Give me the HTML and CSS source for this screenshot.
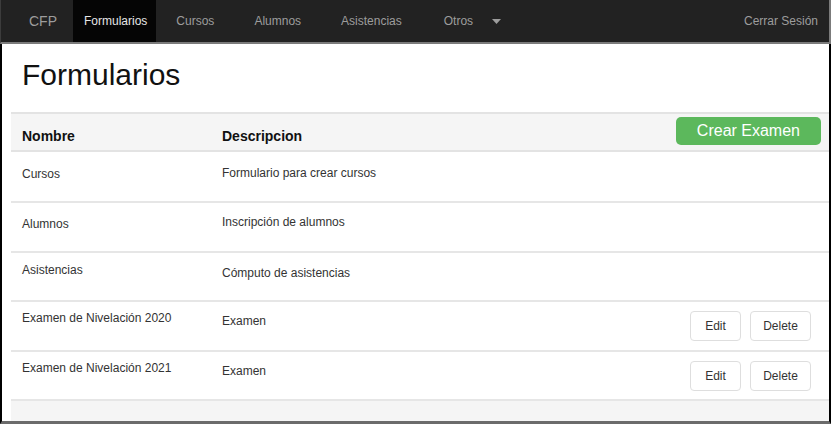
FILE: index.html
```html
<!DOCTYPE html>
<html lang="es">
<head>
<meta charset="utf-8">
<title>Formularios</title>
<link rel="stylesheet" href="styles.css">
</head>
<body>
<div class="page">
  <nav class="navbar">
    <span class="brand">CFP</span>
    <a class="nav-link active">Formularios</a>
    <a class="nav-link">Cursos</a>
    <a class="nav-link">Alumnos</a>
    <a class="nav-link">Asistencias</a>
    <a class="nav-link dropdown">Otros
      <svg class="caret" width="9" height="5" viewBox="0 0 9 5"><polygon points="0,0 9,0 4.5,5" fill="#9d9d9d"/></svg>
    </a>
    <a class="nav-link logout">Cerrar Sesión</a>
  </nav>
  <main class="main">
    <h1 class="title">Formularios</h1>
    <div class="table">
      <div class="thead">
        <div class="th">Nombre</div>
        <div class="th">Descripcion</div>
        <div class="th-actions"><button class="btn-success">Crear Examen</button></div>
      </div>
      <div class="tr r1">
        <div class="td name">Cursos</div>
        <div class="td desc">Formulario para crear cursos</div>
        <div class="td actions"></div>
      </div>
      <div class="tr r2">
        <div class="td name">Alumnos</div>
        <div class="td desc">Inscripción de alumnos</div>
        <div class="td actions"></div>
      </div>
      <div class="tr r3">
        <div class="td name">Asistencias</div>
        <div class="td desc">Cómputo de asistencias</div>
        <div class="td actions"></div>
      </div>
      <div class="tr r4">
        <div class="td name">Examen de Nivelación 2020</div>
        <div class="td desc">Examen</div>
        <div class="td actions"><button class="btn">Edit</button><button class="btn btn-wide">Delete</button></div>
      </div>
      <div class="tr r5">
        <div class="td name">Examen de Nivelación 2021</div>
        <div class="td desc">Examen</div>
        <div class="td actions"><button class="btn">Edit</button><button class="btn btn-wide">Delete</button></div>
      </div>
      <div class="tfoot"></div>
    </div>
  </main>
</div>
</body>
</html>
```

FILE: styles.css
```css
* { box-sizing: border-box; }
html, body { margin: 0; padding: 0; }
body {
  width: 831px;
  height: 424px;
  overflow: hidden;
  font-family: "Liberation Sans", Arial, sans-serif;
  color: #333;
  background: #fff;
}
.page {
  display: flex;
  flex-direction: column;
  height: 424px;
}
.navbar {
  display: flex;
  align-items: stretch;
  height: 44px;
  background: #222;
  border-left: 1px solid #3c3c3c;
  border-right: 2px solid #7b7b7b;
  border-bottom: 2px solid #7b7b7b;
}
.brand {
  display: flex;
  align-items: center;
  padding: 0 16px 0 28px;
  font-size: 14px;
  color: #9d9d9d;
}
.nav-link {
  display: flex;
  align-items: center;
  padding: 0 20px;
  font-size: 12px;
  color: #9d9d9d;
  text-decoration: none;
}
.nav-link.active {
  padding: 0 9px 0 11px;
  background: #050505;
  color: #e6e6e6;
}
.nav-link.dropdown { gap: 19px; padding-left: 22px; }
.caret { display: block; margin-top: 1px; }
.nav-link.logout {
  margin-left: auto;
  padding: 0 11px 0 0;
}
.main {
  flex: 1;
  display: flex;
  flex-direction: column;
  border-left: 2px solid #000;
  border-right: 2px solid #000;
  border-bottom: 3px solid #6b6b6b;
}
.title {
  margin: 0;
  padding: 14px 0 0 20px;
  font-size: 30px;
  line-height: 34px;
  font-weight: normal;
  color: #111;
  height: 68px;
}
.table {
  flex: 1;
  display: flex;
  flex-direction: column;
  margin-left: 9px;
}
.thead, .tr {
  display: grid;
  grid-template-columns: 200px 1fr auto;
  align-items: start;
}
.thead {
  height: 40px;
  background: #f5f5f5;
  border-top: 2px solid #e3e3e3;
  border-bottom: 2px solid #e3e3e3;
}
.th {
  padding: 14px 0 0 11px;
  font-size: 14px;
  line-height: 16px;
  font-weight: bold;
  color: #111;
}
.th-actions { padding: 3px 8px 0 0; }
.btn-success {
  display: block;
  height: 28px;
  padding: 0 21px;
  border: none;
  border-radius: 5px;
  background: #5cb85c;
  color: #fff;
  font-family: inherit;
  font-size: 16px;
  line-height: 28px;
}
.tr {
  border-bottom: 2px solid #e6e6e6;
  font-size: 12px;
  line-height: 14px;
}
.td { padding-left: 11px; }
.name { padding-top: 9px; }
.desc { padding-top: 12px; }
.actions {
  display: flex;
  gap: 9px;
  padding: 9px 18px 0 0;
}
.r1 { height: 51px; }
.r1 .name { padding-top: 15px; }
.r1 .desc { padding-top: 14px; }
.r2 { height: 50px; }
.r2 .name { padding-top: 14px; }
.r2 .desc { padding-top: 12px; }
.r3 { height: 49px; }
.r3 .name { padding-top: 10px; }
.r3 .desc { padding-top: 13px; }
.r4 { height: 50px; }
.r5 { height: 49px; }
.btn {
  width: 51px;
  height: 30px;
  padding: 0;
  border: 1px solid #dedede;
  border-radius: 4px;
  background: #fff;
  color: #333;
  font-family: inherit;
  font-size: 12px;
}
.btn-wide { width: 61px; }
.tfoot {
  flex: 1;
  background: #f5f5f5;
}
```
